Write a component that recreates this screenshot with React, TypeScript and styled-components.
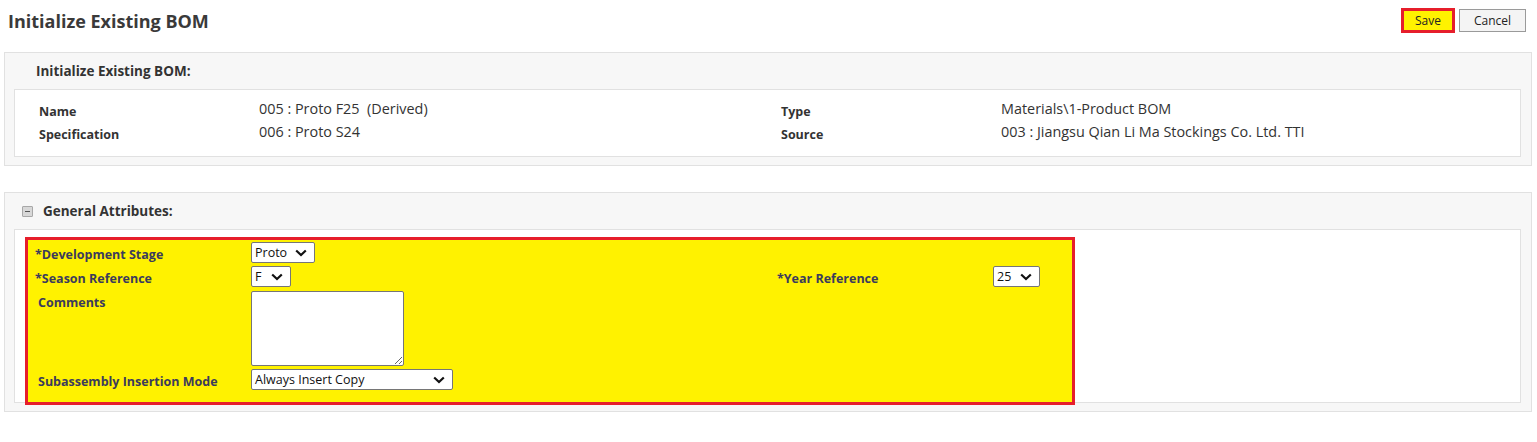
import React from 'react';
import styled, { createGlobalStyle } from 'styled-components';

const GlobalStyle = createGlobalStyle`
  body {
    margin: 0;
    background: #fff;
    font-family: "Open Sans", "Liberation Sans", sans-serif;
    color: #333;
  }
`;

const Page = styled.div`
  width: 1537px;
  height: 442px;
  overflow: hidden;
`;

const TopBar = styled.div`
  display: flex;
  align-items: center;
  justify-content: space-between;
  height: 41px;
  padding: 0 11px 0 8px;
  box-sizing: border-box;
`;

const Title = styled.h1`
  margin: 0;
  font-size: 18px;
  font-weight: 700;
  color: #3a3a3a;
`;

const Actions = styled.div`
  display: flex;
  align-items: center;
  gap: 4px;
`;

const Button = styled.button<{ $highlight?: boolean }>`
  font-family: "Open Sans", "Liberation Sans", sans-serif;
  font-size: 12px;
  color: #222;
  padding: 0;
  cursor: pointer;
  ${(p) =>
    p.$highlight
      ? `
    width: 54px;
    height: 25px;
    background: #fff200;
    border: 3px solid #e61e2b;
  `
      : `
    width: 67px;
    height: 23px;
    background: #f4f4f4;
    border: 1px solid #9a9a9a;
  `}
`;

const Panel = styled.section<{ $top: number }>`
  margin: ${(p) => p.$top}px 5px 0 4px;
  background: #f7f7f7;
  border: 1px solid #e1e1e1;
  padding: 0 10px 8px 9px;
`;

const PanelHeader = styled.div<{ $indent: number }>`
  height: 36px;
  display: flex;
  align-items: center;
  gap: 10px;
  padding-left: ${(p) => p.$indent}px;
  font-size: 13.5px;
  font-weight: 700;
  color: #333;
`;

const CollapseIcon = styled.span`
  width: 9px;
  height: 9px;
  background: #d8d8d8;
  border: 1px solid #a8a8a8;
  border-radius: 1px;
  position: relative;
  &::after {
    content: '';
    position: absolute;
    left: 2px;
    right: 2px;
    top: 4px;
    height: 1px;
    background: #555;
  }
`;

const InnerBox = styled.div<{ $pad: string }>`
  background: #fff;
  border: 1px solid #e1e1e1;
  padding: ${(p) => p.$pad};
`;

const DetailGrid = styled.div`
  display: grid;
  grid-template-columns: 220px 522px 220px 1fr;
  grid-auto-rows: 23px;
`;

const DetailLabel = styled.div`
  font-size: 12.5px;
  font-weight: 700;
  color: #333;
  padding-top: 3px;
`;

const DetailValue = styled.div`
  font-size: 14.4px;
  color: #333;
  margin-top: -1px;
`;

const HighlightBox = styled.div`
  width: 1050px;
  box-sizing: border-box;
  background: #fff200;
  border: 3px solid #e61e2b;
  padding: 2px 0 12px 7px;
  margin-bottom: -3px;
`;

const FormGrid = styled.div`
  display: grid;
  grid-template-columns: 216px 526px 216px 1fr;
  row-gap: 3px;
`;

const FieldLabel = styled.div<{ $indent?: number }>`
  font-size: 12.5px;
  font-weight: 700;
  color: #3b3b5c;
  padding-top: 4px;
  padding-left: ${(p) => p.$indent || 0}px;
`;

const FieldCell = styled.div`
  display: flex;
  align-items: flex-start;
`;

const SelectBox = styled.div<{ $w: number }>`
  width: ${(p) => p.$w}px;
  height: 21px;
  box-sizing: border-box;
  background: #fff;
  border: 1px solid #767676;
  border-radius: 2px;
  display: flex;
  align-items: center;
  justify-content: space-between;
  padding: 0 7px 0 3px;
  font-size: 12.5px;
  color: #111;
`;

const Chevron = () => (
  <svg width="12" height="8" viewBox="0 0 12 8">
    <path d="M1.2 1.5 L6 6 L10.8 1.5" fill="none" stroke="#111" strokeWidth="2.2" />
  </svg>
);

const TextArea = styled.textarea`
  width: 153px;
  height: 75px;
  box-sizing: border-box;
  border: 1px solid #767676;
  border-radius: 2px;
  margin: 1px 0 0;
  display: block;
  font-family: inherit;
`;

const Spacer = styled.div``;

const App: React.FC = () => {
  return (
    <Page>
      <GlobalStyle />
      <TopBar>
        <Title>Initialize Existing BOM</Title>
        <Actions>
          <Button $highlight>Save</Button>
          <Button>Cancel</Button>
        </Actions>
      </TopBar>

      <Panel $top={11}>
        <PanelHeader $indent={22}>Initialize Existing BOM:</PanelHeader>
        <InnerBox $pad="10px 0 10px 24px">
          <DetailGrid>
            <DetailLabel>Name</DetailLabel>
            <DetailValue>005 : Proto F25&nbsp; (Derived)</DetailValue>
            <DetailLabel>Type</DetailLabel>
            <DetailValue>Materials\1-Product BOM</DetailValue>
            <DetailLabel>Specification</DetailLabel>
            <DetailValue>006 : Proto S24</DetailValue>
            <DetailLabel>Source</DetailLabel>
            <DetailValue>003 : Jiangsu Qian Li Ma Stockings Co. Ltd. TTI</DetailValue>
          </DetailGrid>
        </InnerBox>
      </Panel>

      <Panel $top={26}>
        <PanelHeader $indent={8}>
          <CollapseIcon />
          General Attributes:
        </PanelHeader>
        <InnerBox $pad="7px 0 0 10px">
          <HighlightBox>
            <FormGrid>
              <FieldLabel>*Development Stage</FieldLabel>
              <FieldCell>
                <SelectBox $w={64}>
                  Proto <Chevron />
                </SelectBox>
              </FieldCell>
              <Spacer />
              <Spacer />

              <FieldLabel>*Season Reference</FieldLabel>
              <FieldCell>
                <SelectBox $w={40}>
                  F <Chevron />
                </SelectBox>
              </FieldCell>
              <FieldLabel>*Year Reference</FieldLabel>
              <FieldCell>
                <SelectBox $w={47}>
                  25 <Chevron />
                </SelectBox>
              </FieldCell>

              <FieldLabel $indent={3}>Comments</FieldLabel>
              <FieldCell>
                <TextArea />
              </FieldCell>
              <Spacer />
              <Spacer />

              <FieldLabel $indent={3}>Subassembly Insertion Mode</FieldLabel>
              <FieldCell>
                <SelectBox $w={202}>
                  Always Insert Copy <Chevron />
                </SelectBox>
              </FieldCell>
              <Spacer />
              <Spacer />
            </FormGrid>
          </HighlightBox>
        </InnerBox>
      </Panel>
    </Page>
  );
};

export default App;
